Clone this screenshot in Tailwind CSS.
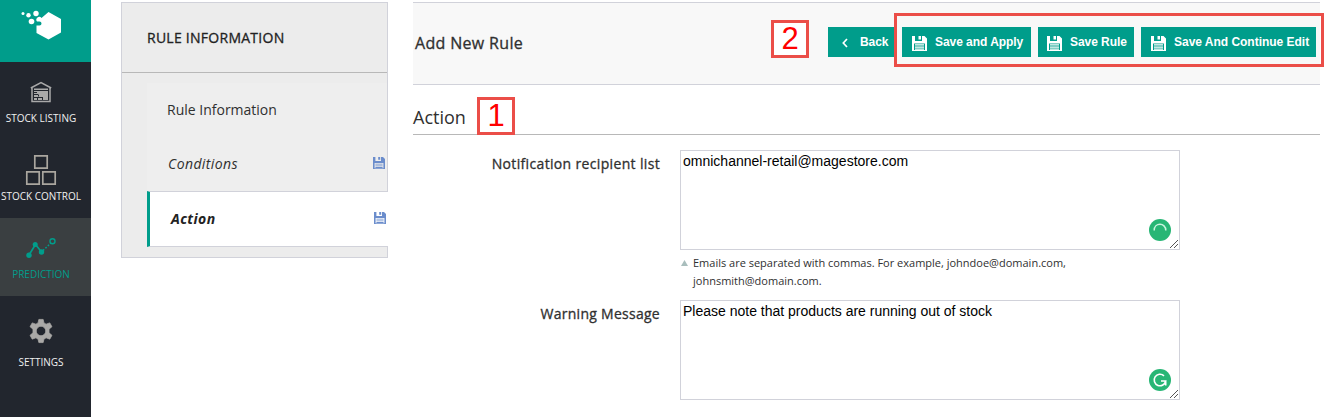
<!DOCTYPE html>
<html lang="en">
<head>
<meta charset="utf-8">
<title>Add New Rule</title>
<script src="https://cdn.jsdelivr.net/npm/@tailwindcss/browser@4"></script>
</head>
<body class="h-[417px] overflow-hidden bg-white font-['Open_Sans',sans-serif] text-[#303030]">
<svg class="hidden">
  <symbol id="disk" viewBox="0 0 15 15"><path fill="currentColor" fill-rule="evenodd" d="M0 0h3v5h7V0h2.500L15 2.500V15H0zM6.500 0H9v3.500H6.500zM2 7.500v6.500h11V7.500zM3 8.300h9v1.200H3zm0 2.200h9v1.200H3zm0 2.100h9v1.200H3z"/></symbol>
</svg>
<div class="flex h-full">
  <nav class="flex w-[91px] shrink-0 flex-col bg-[#22262e] text-[10px] leading-[14px] text-[#f0f0f0]">
    <div class="h-[62px] bg-[#009d8b]">
      <svg class="h-[62px] w-[91px]" viewBox="0 0 91 62" fill="#fff"><path d="M48.500 12 61 19v13.500L48.500 39.500 36.500 33v-7.500h3a2 2 0 0 0 0-4h-2.500a2.500 2.500 0 0 1 4.500-3.500z"/><circle cx="23" cy="13.500" r="1.500"/><circle cx="28.500" cy="15.300" r="2.200"/><circle cx="36" cy="13.500" r="2.700"/><circle cx="31.500" cy="21.500" r="2.800"/></svg>
    </div>
    <div class="flex h-[78px] flex-col items-center pt-[19px]">
      <svg class="ml-[-10px] h-[22px] w-[22px]" viewBox="0 0 22 22" fill="none" stroke="#a9a9a9"><path stroke-width="1.500" d="M.8 7 11 1.600 21.200 7M2 6.500v14h18v-14"/><path fill="#aaa" stroke="none" d="M4 7.500h14V9H4zM4 10h14v9H4z"/><path stroke="#22262e" d="M4 13.500h4M4 16.500h8M8.500 13.500v2M12.500 16v3M4 11.500h3M7.500 16v3"/></svg>
      <span class="mt-[8px] ml-[-9px]">STOCK LISTING</span>
    </div>
    <div class="flex h-[78px] flex-col items-center pt-[14px]">
      <svg class="ml-[-10px] h-[32px] w-[32px]" viewBox="0 0 32 32" fill="none" stroke="#aaa69f" stroke-width="1.700"><path d="M9.800 1.800h12.400v12.400H9.800zM1.800 17.800h12.400v12.400H1.800zM17.800 17.800h12.400v12.400H17.800z"/></svg>
      <span class="mt-[3px] ml-[-9px]">STOCK CONTROL</span>
    </div>
    <div class="flex h-[78px] flex-col items-center bg-[#3a3f41] pt-[19px] text-[#009d8b]">
      <svg class="ml-[-10px] h-[22px] w-[32px]" viewBox="0 0 32 22" fill="none" stroke="#009d8b"><path stroke-width="1.600" d="M4 18 10.500 7.500 16.500 15"/><path stroke-width="1.500" stroke-dasharray="1.700 1.600" d="M18 13.500 26 6"/><g fill="#009d8b" stroke="none"><circle cx="4" cy="18.300" r="2.700"/><circle cx="10.200" cy="7.500" r="2.500"/><circle cx="16.500" cy="15" r="2.700"/></g><circle cx="27.500" cy="4.300" r="2.500" stroke-width="1.400"/></svg>
      <span class="mt-[8px] ml-[-9px]">PREDICTION</span>
    </div>
    <div class="flex h-[78px] flex-col items-center pt-[22px]">
      <svg class="ml-[-10px] h-[26px] w-[26px]" viewBox="0 0 24 24" fill="#aaa9a7"><path stroke="#aaa9a7" stroke-width=".7" stroke-linejoin="round" d="M10 1.300h4l.7 3.200 2 1.200 3.400-1.200 2 3.500-2.700 2.300v3.400l2.700 2.300-2 3.500-3.400-1.200-2 1.200-.7 3.200h-4l-.7-3.200-2-1.200-3.400 1.200-2-3.500 2.700-2.300v-3.400L1.900 8l2-3.500 3.400 1.200 2-1.200zM12 7.600a4.400 4.400 0 1 0 0 8.800 4.400 4.400 0 0 0 0-8.800z"/></svg>
      <span class="mt-[11px] ml-[-9px]">SETTINGS</span>
    </div>
  </nav>

  <aside class="mt-[2px] ml-[30px] h-[256px] w-[267px] shrink-0 border border-[#d1d2da] bg-[#ececec]">
    <h2 class="flex h-[70px] items-center border-b border-[#b8b8b8] pl-[25px] text-[14px] tracking-[.26px] text-[#222] [-webkit-text-stroke:.3px]">RULE INFORMATION</h2>
    <div class="mt-[10px] -mr-px ml-[25px] text-[14px] leading-[20px]">
      <div class="mr-px flex h-[54px] items-center bg-[#eee] pl-[20px]">Rule Information</div>
      <div class="mr-px flex h-[54px] items-center justify-between bg-[#eee] pr-[2px] pl-[21px] tracking-[.4px] italic">Conditions<svg class="-mt-[2px] size-[12px] text-[#6b8dcc]"><use href="#disk"/></svg></div>
      <div class="flex h-[56px] items-center justify-between border-y border-l-3 border-y-[#d1d2da] border-l-[#009d8b] bg-white pr-[2px] pl-[21px] font-bold tracking-[.4px] text-[#222] italic">Action<svg class="-mt-[2px] size-[12px] text-[#6b8dcc]"><use href="#disk"/></svg></div>
    </div>
  </aside>

  <main class="mt-[2px] ml-[25px] w-[907px] shrink-0">
    <header class="flex h-[83px] items-start justify-between border-y border-[#d1d2da] bg-[#f8f8f8] pr-[4px] pl-[2px]">
      <h1 class="mt-[29px] text-[16px] leading-[22px] tracking-[.33px] [-webkit-text-stroke:.3px]">Add New Rule</h1>
      <div class="relative mt-[24px] flex gap-[7px] font-['Liberation_Sans',sans-serif] text-[12px] font-bold text-white">
        <span class="absolute -top-[7px] -left-[57px] flex size-[38px] items-center justify-center border-3 border-[#eb4e48] bg-white text-[31px] font-normal text-[#f00]">2</span>
        <button class="flex h-[30px] w-[67px] items-center bg-[#009d8b] pl-[14px]"><svg class="mt-[2px] h-[10px] w-[6px]" viewBox="0 0 6 10" fill="none" stroke="#fff" stroke-width="1.700"><path d="M5 1 1.300 5 5 9"/></svg><span class="ml-[12px] tracking-[-.1px]">Back</span></button>
        <button class="flex h-[30px] w-[129px] items-center bg-[#009d8b] pl-[10px]"><svg class="mt-[2px] size-[15px]"><use href="#disk"/></svg><span class="ml-[8px] tracking-[-.05px] whitespace-nowrap">Save and Apply</span></button>
        <button class="flex h-[30px] w-[96px] items-center bg-[#009d8b] pl-[9px]"><svg class="mt-[2px] size-[15px]"><use href="#disk"/></svg><span class="ml-[8px] tracking-[-.05px] whitespace-nowrap">Save Rule</span></button>
        <button class="flex h-[30px] w-[175px] items-center bg-[#009d8b] pl-[10px]"><svg class="mt-[2px] size-[15px]"><use href="#disk"/></svg><span class="ml-[8px] tracking-[-.02px] whitespace-nowrap">Save And Continue Edit</span></button>
        <span class="absolute -top-[14px] left-[66px] h-[54px] w-[430px] border-3 border-[#eb4e48]"></span>
      </div>
    </header>
    <div class="relative h-[50px] border-b border-[#b8b8b8] pt-[20px]">
      <h2 class="text-[18px] leading-[24px]">Action</h2>
      <span class="absolute top-[12px] left-[64px] flex size-[38px] items-center justify-center border-3 border-[#eb4e48] bg-white font-['Liberation_Sans',sans-serif] text-[31px] text-[#f00]">1</span>
    </div>
    <div class="mt-[15px] flex">
      <label class="mt-[4px] w-[247px] text-right text-[14px] leading-[20px] tracking-[.34px] [-webkit-text-stroke:.3px]">Notification recipient list</label>
      <div class="ml-[20px] w-[500px]">
        <div class="relative h-[100px] border border-[#d1d2da] pt-px pl-[2px] font-['Liberation_Sans',sans-serif] text-[14px] leading-[18px] text-black">omnichannel-retail@magestore.com
          <svg class="absolute right-[8px] bottom-[8px] size-[22px]" viewBox="0 0 22 22"><circle cx="11" cy="11" r="11" fill="#27b675"/><path d="M5.200 11.500C5.200 3.300 16.800 3.300 16.800 11.500" fill="none" stroke="#c8f5df" stroke-width="1.500"/></svg>
          <svg class="absolute right-px bottom-px size-[8px]" viewBox="0 0 8 8" stroke="#555"><path d="M0 8 8 0M4 8 8 4"/></svg>
        </div>
        <div class="mt-[4px] flex h-[46px] text-[11px] leading-[18px]">
          <svg class="mt-[6px] ml-px h-[6px] w-[7px]" viewBox="0 0 7 6"><path d="M3.500 0 7 6H0z" fill="#a9bebd"/></svg>
          <p class="ml-[5px] w-[400px]">Emails are separated with commas. For example, johndoe@domain.com,<br>johnsmith@domain.com.</p>
        </div>
      </div>
    </div>
    <div class="flex">
      <label class="mt-[4px] w-[247px] text-right text-[14px] leading-[20px] tracking-[.27px] [-webkit-text-stroke:.3px]">Warning Message</label>
      <div class="relative ml-[20px] h-[100px] w-[500px] border border-[#d1d2da] pt-px pl-[2px] font-['Liberation_Sans',sans-serif] text-[14px] leading-[18px] text-black">Please note that products are running out of stock
        <svg class="absolute right-[8px] bottom-[8px] size-[22px]" viewBox="0 0 22 22"><circle cx="11" cy="11" r="11" fill="#27b675"/><path d="M15 6.800A5.800 5.800 0 1 0 16.700 12H12M16.700 12v4.500" fill="none" stroke="#fff" stroke-width="1.600"/></svg>
        <svg class="absolute right-px bottom-px size-[8px]" viewBox="0 0 8 8" stroke="#555"><path d="M0 8 8 0M4 8 8 4"/></svg>
      </div>
    </div>
  </main>
</div>
</body>
</html>
